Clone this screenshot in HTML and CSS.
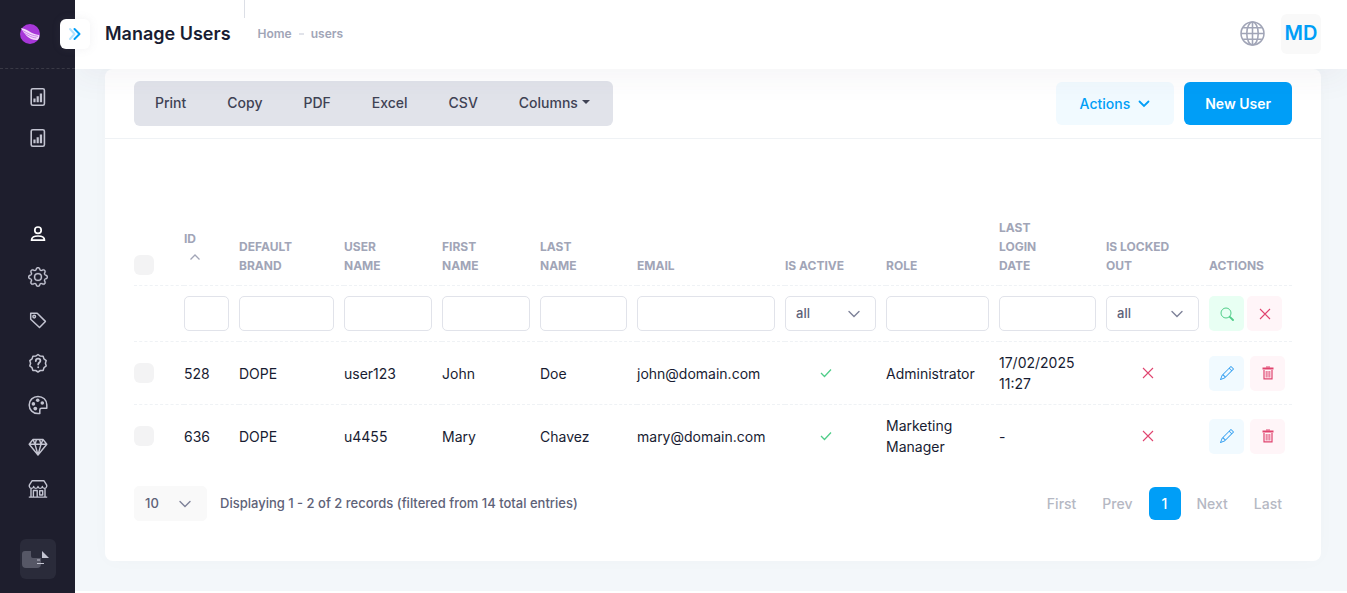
FILE: index.html
```html
<!DOCTYPE html>
<html lang="en">
<head>
<meta charset="utf-8">
<title>Manage Users</title>
<link rel="stylesheet" href="styles.css">
</head>
<body>
<svg class="sprite" aria-hidden="true">
  <symbol id="i-chart" viewBox="0 0 16 20"><rect x="1.2" y="1.7" width="13.2" height="16.6" rx="1.6" fill="none" stroke="currentColor" stroke-width="1.600"/><path d="M3.4 11.5h2.200v3.700h-2.200zM6.600 9.300h2.200v5.900h-2.200zM9.800 6.500h2.300v8.700h-2.300z" fill="currentColor"/></symbol>
  <symbol id="i-user" viewBox="0 0 20 20"><g fill="none" stroke="currentColor" stroke-width="1.700"><circle cx="10" cy="6.200" r="3.200"/><path d="M3.500 16.200c0-3 2.700-4.200 6.500-4.200s6.500 1.200 6.500 4.200z" stroke-linejoin="round"/></g></symbol>
  <symbol id="i-gear" viewBox="0 0 16 16"><path fill="currentColor" stroke="currentColor" stroke-width=".2" d="M8 4.754a3.246 3.246 0 1 0 0 6.492 3.246 3.246 0 0 0 0-6.492M5.754 8a2.246 2.246 0 1 1 4.492 0 2.246 2.246 0 0 1-4.492 0"/><path fill="currentColor" stroke="currentColor" stroke-width=".2" d="M9.796 1.343c-.527-1.790-3.065-1.790-3.592 0l-.094.319a.873.873 0 0 1-1.255.520l-.292-.160c-1.640-.892-3.433.902-2.540 2.541l.159.292a.873.873 0 0 1-.520 1.255l-.319.094c-1.790.527-1.790 3.065 0 3.592l.319.094a.873.873 0 0 1 .520 1.255l-.160.292c-.892 1.640.901 3.434 2.541 2.540l.292-.159a.873.873 0 0 1 1.255.520l.094.319c.527 1.790 3.065 1.790 3.592 0l.094-.319a.873.873 0 0 1 1.255-.520l.292.160c1.640.893 3.434-.902 2.540-2.541l-.159-.292a.873.873 0 0 1 .520-1.255l.319-.094c1.790-.527 1.790-3.065 0-3.592l-.319-.094a.873.873 0 0 1-.520-1.255l.160-.292c.893-1.640-.902-3.433-2.541-2.540l-.292.159a.873.873 0 0 1-1.255-.520zm-2.633.283c.246-.835 1.428-.835 1.674 0l.094.319a1.873 1.873 0 0 0 2.693 1.115l.291-.160c.764-.415 1.600.420 1.184 1.185l-.159.292a1.873 1.873 0 0 0 1.116 2.692l.318.094c.835.246.835 1.428 0 1.674l-.319.094a1.873 1.873 0 0 0-1.115 2.693l.160.291c.415.764-.420 1.600-1.185 1.184l-.291-.159a1.873 1.873 0 0 0-2.693 1.116l-.094.318c-.246.835-1.428.835-1.674 0l-.094-.319a1.873 1.873 0 0 0-2.692-1.115l-.292.160c-.764.415-1.600-.420-1.184-1.185l.159-.291A1.873 1.873 0 0 0 1.945 8.930l-.319-.094c-.835-.246-.835-1.428 0-1.674l.319-.094A1.873 1.873 0 0 0 3.060 4.377l-.160-.292c-.415-.764.420-1.600 1.185-1.184l.292.159a1.873 1.873 0 0 0 2.692-1.115z"/></symbol>
  <symbol id="i-tag" viewBox="0 0 20 20"><g fill="none" stroke="currentColor" stroke-width="1.500" stroke-linejoin="round"><path d="M2.700 3.200h6.500l8.200 8.200-5.900 6.100-8.800-8.200z"/><circle cx="6.200" cy="6.600" r="1.300"/></g></symbol>
  <symbol id="i-help" viewBox="0 0 20 20"><g fill="none" stroke="currentColor" stroke-width="1.500" stroke-linejoin="round" stroke-linecap="round"><path d="M10 1.500l2.300 1.600 2.800.100.900 2.700 2.200 1.700-.800 2.700.800 2.700-2.200 1.700-.900 2.700-2.800.100L10 19l-2.300-1.500-2.800-.100L4 14.700 1.800 13l.8-2.700-.8-2.700L4 5.900l.900-2.700 2.800-.100z"/><path d="M7.800 8c0-1.500 1-2.300 2.300-2.300s2.300.8 2.300 2.100c0 1.700-2.200 1.800-2.200 3.800M10.200 14.100v.2" stroke-width="1.800"/></g></symbol>
  <symbol id="i-palette" viewBox="0 0 20 20"><path d="M10 18.600C5 18.600 1.200 14.800 1.200 10S5 1.400 10 1.400s8.800 3.600 8.800 8.400v3.400h-5.300c-1.200 0-1.700.6-1.700 1.700v3.500z" fill="none" stroke="currentColor" stroke-width="1.500" stroke-linejoin="round"/><g fill="currentColor"><circle cx="9.700" cy="5.200" r="1.800"/><circle cx="5.400" cy="8.900" r="1.800"/><circle cx="14.300" cy="8" r="1.800"/><circle cx="7.300" cy="13.600" r="1.900"/></g></symbol>
  <symbol id="i-gem" viewBox="0 0 20 20"><path d="M5 2.500h10l3.800 4.800L10 18 1.200 7.300zM1.500 7.300h17M5 2.500l2 4.800L10 18l3-10.700 2-4.800M7 7.300l1.500-4.800M13 7.300l-1.500-4.800" fill="none" stroke="currentColor" stroke-width="1.400" stroke-linejoin="round"/></symbol>
  <symbol id="i-shop" viewBox="0 0 20 20"><path d="M4 1.800h12l2.700 4.400v1.300a2.200 2.200 0 0 1-4.350 0 2.200 2.200 0 0 1-4.350 0 2.200 2.200 0 0 1-4.350 0 2.200 2.200 0 0 1-4.350 0V6.200zM3 9.700v8M17 9.700v8M.800 18.100h18.400M5.400 18v-6.500h3.800V18M11.700 11.700h3v4.300h-3z" fill="none" stroke="currentColor" stroke-width="1.400" stroke-linejoin="round"/></symbol>
  <symbol id="i-x" viewBox="0 0 12 12"><path d="M1 1l10 10M11 1L1 11" fill="none" stroke="currentColor" stroke-width="1.100"/></symbol>
  <symbol id="i-check" viewBox="0 0 12 12"><path d="M1 6l3.500 3.500L11 2.500" fill="none" stroke="currentColor" stroke-width="1.300"/></symbol>
  <symbol id="i-search" viewBox="0 0 14 14"><g fill="none" stroke="currentColor"><circle cx="6" cy="6" r="5"/><path d="M9.800 9.800L13 13" stroke-width="1.900" stroke-linecap="round"/></g></symbol>
  <symbol id="i-pencil" viewBox="0 0 16 16"><path fill="currentColor" d="M12.146.146a.5.5 0 0 1 .708 0l3 3a.5.5 0 0 1 0 .708l-10 10a.5.5 0 0 1-.168.110l-5 2a.5.5 0 0 1-.650-.650l2-5a.5.5 0 0 1 .110-.168zM11.207 2.500 13.500 4.793 14.793 3.500 12.500 1.207zm1.586 3L10.500 3.207 4 9.707V10h.5a.5.5 0 0 1 .5.5v.5h.5a.5.5 0 0 1 .5.5v.5h.293zm-9.761 5.175-.106.106-1.528 3.821 3.821-1.528.106-.106A.5.5 0 0 1 5 12.500V12h-.5a.5.5 0 0 1-.5-.5V11h-.5a.5.5 0 0 1-.468-.325"/></symbol>
  <symbol id="i-trash" viewBox="0 0 12 14"><path d="M.500 2.500h11" stroke="currentColor" stroke-width="2"/><path d="M4 1h4M2 4v8.900h8V4" fill="none" stroke="currentColor" stroke-width="1.200"/><path d="M4.200 5v6.500M6 5v6.500M7.800 5v6.500" stroke="currentColor" stroke-width=".900"/></symbol>
</svg>

<aside class="sidebar">
  <div class="brand">
    <a href="#" aria-label="Dashboard"><svg class="logo" viewBox="0 0 20 20"><circle cx="10" cy="10" r="10" fill="#a737d8"/><path d="M1 4c4 .5 7 2.500 10 4.500 3 1.800 6 2 8.200 2.500.3 2-.4 3.500-1.200 4.800-4 .7-8-.8-11-3.600C5 10.200 2.500 7 1 4z" fill="#f4dcfb"/><path d="M2.500 6.500c4 1.500 6 4.500 15.500 5.800M4 9c4 2 6 4.200 12.500 5" fill="none" stroke="#b95be2" stroke-width=".7"/></svg></a>
    <button class="toggle" aria-label="Expand menu"><svg viewBox="0 0 14 14" fill="none" stroke="#009ef7" stroke-width="2" stroke-linecap="round" stroke-linejoin="round"><path d="M2 2l4.500 5L2 12" opacity=".3"/><path d="M6.500 2l5 5-5 5"/></svg></button>
  </div>
  <nav class="menu">
    <div class="group reports">
      <a href="#" aria-label="Reports"><svg class="doc"><use href="#i-chart"/></svg></a>
      <a href="#" aria-label="Statistics"><svg class="doc"><use href="#i-chart"/></svg></a>
    </div>
    <div class="group admin">
      <a href="#" class="active" aria-label="Users"><svg><use href="#i-user"/></svg></a>
      <a href="#" aria-label="Settings"><svg><use href="#i-gear"/></svg></a>
      <a href="#" aria-label="Tags"><svg><use href="#i-tag"/></svg></a>
      <a href="#" aria-label="Help"><svg><use href="#i-help"/></svg></a>
    </div>
    <div class="group shop">
      <a href="#" aria-label="Appearance"><svg><use href="#i-palette"/></svg></a>
      <a href="#" aria-label="Premium"><svg><use href="#i-gem"/></svg></a>
      <a href="#" aria-label="Store"><svg><use href="#i-shop"/></svg></a>
    </div>
  </nav>
  <button class="docs" aria-label="Documentation"><svg viewBox="0 0 28 18"><path d="M3 1h6v5q0 2 2 2h8v6q0 4-4 4H4q-4 0-4-4V4q0-3 3-3z" fill="#565766"/><path d="M20 1l7 7h-7z" fill="#c3c4d1"/><path d="M15 10h3M15 13.500h7" stroke="#c3c4d1" stroke-width="1.200"/></svg></button>
</aside>

<div class="page">
  <header class="topbar">
    <h1>Manage Users</h1>
    <span class="rule"></span>
    <nav class="crumbs" aria-label="Breadcrumb"><a href="#">Home</a><span class="dash"></span><span>users</span></nav>
    <div class="account">
      <button class="globe" aria-label="Language"><svg viewBox="0 0 24 24" fill="none" stroke="#a1a5b7" stroke-width="1.500"><circle cx="12" cy="12" r="11"/><ellipse cx="12" cy="12" rx="5.500" ry="11"/><path d="M12 1v22M1 12h22M3 6.500h18M3 17.500h18"/></svg></button>
      <button class="avatar">MD</button>
    </div>
  </header>

  <main class="content">
    <section class="card">
      <div class="card-head">
        <div class="exports">
          <button>Print</button><button>Copy</button><button>PDF</button><button>Excel</button><button>CSV</button><button>Columns<i class="caret"></i></button>
        </div>
        <div class="tools">
          <button class="btn light">Actions<svg viewBox="0 0 12 8"><path d="M1.500 1.500L6 6l4.500-4.500" fill="none" stroke="currentColor" stroke-width="1.800" stroke-linecap="round"/></svg></button>
          <button class="btn primary">New User</button>
        </div>
      </div>
      <div class="card-body">
        <table class="users">
          <colgroup><col class="c-check"><col class="c-id"><col class="c-brand"><col class="c-name"><col class="c-name"><col class="c-last"><col class="c-email"><col class="c-active"><col class="c-role"><col class="c-date"><col class="c-locked"><col class="c-actions"></colgroup>
          <thead>
            <tr>
              <th class="flush"><input type="checkbox" aria-label="Select all"></th>
              <th class="flush">ID<svg class="sort" viewBox="0 0 12 8"><path d="M1.500 6.500L6 2l4.500 4.500" fill="none" stroke="currentColor" stroke-width="1.300"/></svg></th>
              <th>Default Brand</th><th>User Name</th><th>First Name</th><th>Last Name</th><th>Email</th><th>Is Active</th><th>Role</th><th>Last Login Date</th><th>Is Locked Out</th><th class="flush">Actions</th>
            </tr>
            <tr class="filters">
              <td></td>
              <td><input type="text" aria-label="ID"></td>
              <td><input type="text" aria-label="Default brand"></td>
              <td><input type="text" aria-label="User name"></td>
              <td><input type="text" aria-label="First name"></td>
              <td><input type="text" aria-label="Last name"></td>
              <td><input type="text" aria-label="Email"></td>
              <td><select aria-label="Is active"><option>all</option></select></td>
              <td><input type="text" aria-label="Role"></td>
              <td><input type="text" aria-label="Last login date"></td>
              <td><select aria-label="Is locked out"><option>all</option></select></td>
              <td><div class="acts tight"><button class="ib green" aria-label="Search"><svg><use href="#i-search"/></svg></button><button class="ib red" aria-label="Reset"><svg class="small"><use href="#i-x"/></svg></button></div></td>
            </tr>
          </thead>
          <tbody>
            <tr>
              <td><input type="checkbox" aria-label="Select 528"></td><td>528</td><td>DOPE</td><td>user123</td><td>John</td><td>Doe</td><td>john@domain.com</td>
              <td class="mark yes"><svg><use href="#i-check"/></svg></td><td>Administrator</td><td>17/02/2025 11:27</td><td class="mark no"><svg><use href="#i-x"/></svg></td>
              <td><div class="acts"><button class="ib blue" aria-label="Edit"><svg><use href="#i-pencil"/></svg></button><button class="ib red" aria-label="Delete"><svg><use href="#i-trash"/></svg></button></div></td>
            </tr>
            <tr>
              <td><input type="checkbox" aria-label="Select 636"></td><td>636</td><td>DOPE</td><td>u4455</td><td>Mary</td><td>Chavez</td><td>mary@domain.com</td>
              <td class="mark yes"><svg><use href="#i-check"/></svg></td><td>Marketing Manager</td><td>-</td><td class="mark no"><svg><use href="#i-x"/></svg></td>
              <td><div class="acts"><button class="ib blue" aria-label="Edit"><svg><use href="#i-pencil"/></svg></button><button class="ib red" aria-label="Delete"><svg><use href="#i-trash"/></svg></button></div></td>
            </tr>
          </tbody>
        </table>
        <div class="table-foot">
          <select class="length" aria-label="Rows per page"><option>10</option></select>
          <span class="info">Displaying 1 - 2 of 2 records (filtered from 14 total entries)</span>
          <nav class="pager" aria-label="Pages"><a href="#">First</a><a href="#">Prev</a><a href="#" class="current">1</a><a href="#">Next</a><a href="#">Last</a></nav>
        </div>
      </div>
    </section>
  </main>
</div>
</body>
</html>
```
FILE: styles.css
```css
* { box-sizing: border-box; }
body {
  margin: 0;
  display: flex;
  min-height: 100vh;
  background: #fff;
  color: #181c32;
  font: 400 14px/21px Inter, "Liberation Sans", sans-serif;
}
button, input, select { font: inherit; color: inherit; margin: 0; }
button { border: 0; padding: 0; background: none; cursor: pointer; }
a { color: inherit; text-decoration: none; }
svg { display: block; }
.sprite { position: absolute; width: 0; height: 0; }

/* Sidebar */
.sidebar {
  flex: 0 0 75px;
  display: flex;
  flex-direction: column;
  background: #1e1e2d;
  color: #c3c4d1;
  z-index: 3;
}
.brand {
  position: relative;
  height: 69px;
  padding-left: 20px;
  display: flex;
  align-items: center;
  border-bottom: 1px dashed #393945;
}
.logo { width: 20px; height: 20px; }
.toggle {
  position: absolute;
  right: -15px;
  top: 19px;
  width: 30px;
  height: 30px;
  display: grid;
  place-items: center;
  border-radius: 6px;
  background: #fff;
  box-shadow: 0 0 10px rgba(113, 121, 136, .1);
}
.toggle svg { width: 14px; height: 14px; }
.menu { flex: 1; display: flex; flex-direction: column; padding-top: 7px; }
.group { display: flex; flex-direction: column; }
.group a { display: grid; place-items: center; height: 43px; }
.group svg { width: 20px; height: 20px; }
.group svg.doc { width: 16px; }
.reports { margin-bottom: 54px; }
.reports a { height: 41px; }
.shop a { height: 42px; }
.group .active { color: #fff; }
.docs {
  width: 36px;
  height: 40px;
  margin: 0 0 14px 20px;
  padding-left: 2px;
  display: flex;
  align-items: center;
  border-radius: 6px;
  background: #2a2b3a;
}
.docs svg { width: 28px; height: 18px; }

/* Top bar */
.page { flex: 1; min-width: 0; }
.topbar {
  position: relative;
  z-index: 2;
  height: 69px;
  padding: 0 26px 2px 30px;
  display: flex;
  align-items: center;
  background: #fff;
  box-shadow: 0 10px 30px rgba(82, 63, 105, .05);
}
h1 { margin: 0; font-size: 18px; font-weight: 600; line-height: 22px; }
.rule { width: 1px; height: 18px; margin: 0 13px; align-self: flex-start; background: #dcdfe6; }
.crumbs { display: flex; align-items: center; color: #a1a5b7; font-size: 12px; font-weight: 600; }
.dash { width: 5px; height: 2px; margin: 0 7px; background: #e1e3ea; }
.account { margin-left: auto; display: flex; align-items: center; gap: 16px; }
.globe svg { width: 25px; height: 25px; }
.avatar { width: 40px; height: 40px; border-radius: 6px; background: #f9f9f9; color: #009ef7; font-size: 20px; font-weight: 600; }

/* Card */
.content { padding: 0 26px 30px 30px; background: #f3f7fa; }
.card { border-radius: 8px; background: #fff; box-shadow: 0 0 20px rgba(76, 87, 125, .02); }
.card-head {
  display: flex;
  align-items: center;
  justify-content: space-between;
  height: 70px;
  padding: 0 29px;
  border-bottom: 1px solid #eff2f5;
}
.exports { display: flex; gap: 1px; height: 45px; padding: 0 3px 2px 1px; border-radius: 6px; background: #e1e3ea; }
.exports button { padding: 0 20px; color: #3f4254; font-size: 14px; font-weight: 500; }
.caret {
  display: inline-block;
  margin-left: 4px;
  vertical-align: 4px;
  border: 4px solid transparent;
  border-top-color: currentColor;
  border-bottom: 0;
}
.tools { display: flex; gap: 10px; }
.btn { height: 43px; border-radius: 6px; font-size: 14px; font-weight: 500; display: flex; align-items: center; }
.light { padding: 0 24px; gap: 8px; background: #f1faff; color: #009ef7; }
.light svg { width: 12px; height: 8px; }
.primary { padding: 0 21px; background: #009ef7; color: #fff; font-weight: 600; }
.card-body { padding: 69px 29px 40px; }

/* Table */
.users { width: 100%; table-layout: fixed; border-collapse: collapse; }
.c-check { width: 50px; }
.c-id { width: 55px; }
.c-brand { width: 105px; }
.c-name { width: 98px; }
.c-last { width: 97px; }
.c-email { width: 148px; }
.c-active { width: 101px; }
.c-role { width: 113px; }
.c-date { width: 107px; }
.c-locked { width: 103px; }
.c-actions { width: 83px; }
th {
  padding: 10px 36px 10px 0;
  color: #a1a5b7;
  font-size: 12px;
  font-weight: 700;
  line-height: 19px;
  text-align: left;
  text-transform: uppercase;
  vertical-align: bottom;
}
th.flush { padding-right: 0; }
td { padding: 10px 10px 10px 0; vertical-align: middle; }
td:last-child { padding-right: 0; }
td.mark { padding-right: 20px; }
thead tr, tbody tr:not(:last-child) { border-bottom: 1px dashed #eff2f5; }
.sort { width: 12px; height: 8px; margin: 5px 0 14px 5px; }
input[type="checkbox"] {
  appearance: none;
  display: block;
  width: 20px;
  height: 20px;
  border-radius: 6px;
  background: #f3f3f4;
}
input[type="text"], select {
  display: block;
  width: 100%;
  height: 35px;
  padding: 0 10px;
  border: 1px solid #e1e3ea;
  border-radius: 5px;
  background: #fff;
  color: #5e6278;
  font-size: 13px;
}
select {
  appearance: none;
  font-weight: 500;
  background: #fff url("data:image/svg+xml,%3Csvg xmlns='http://www.w3.org/2000/svg' viewBox='0 0 12 8'%3E%3Cpath d='M1 1.500L6 6.500l5-5' fill='none' stroke='%237e8299' stroke-width='1.400' stroke-linecap='round'/%3E%3C/svg%3E") no-repeat right 15px center / 12px 8px;
}
.acts { display: flex; gap: 6px; }
.tight { gap: 3px; }
.ib { width: 35px; height: 35px; display: grid; place-items: center; border-radius: 5px; }
.ib svg { width: 14px; height: 14px; }
.ib svg.small { width: 12px; height: 12px; }
.green { background: #e8fff3; color: #50cd89; }
.red { background: #fff5f8; color: #e0446f; }
.blue { background: #f1faff; color: #2f9df0; }
.mark svg { width: 12px; height: 12px; margin: 0 auto; }
.yes { color: #50cd89; }
.no { color: #e0446f; }

/* Footer */
.table-foot { display: flex; align-items: center; padding-top: 19px; }
.length { width: 73px; border-color: #f9f9f9; background-color: #f9f9f9; }
.info { margin-left: 13px; color: #5e6278; font-size: 13px; font-weight: 500; }
.pager { margin-left: auto; display: flex; gap: 6px; color: #b5b8c3; font-weight: 500; }
.pager a { min-width: 32px; height: 33px; padding: 6px 10px; border-radius: 6px; text-align: center; }
.pager .current { background: #009ef7; color: #fff; }
```
